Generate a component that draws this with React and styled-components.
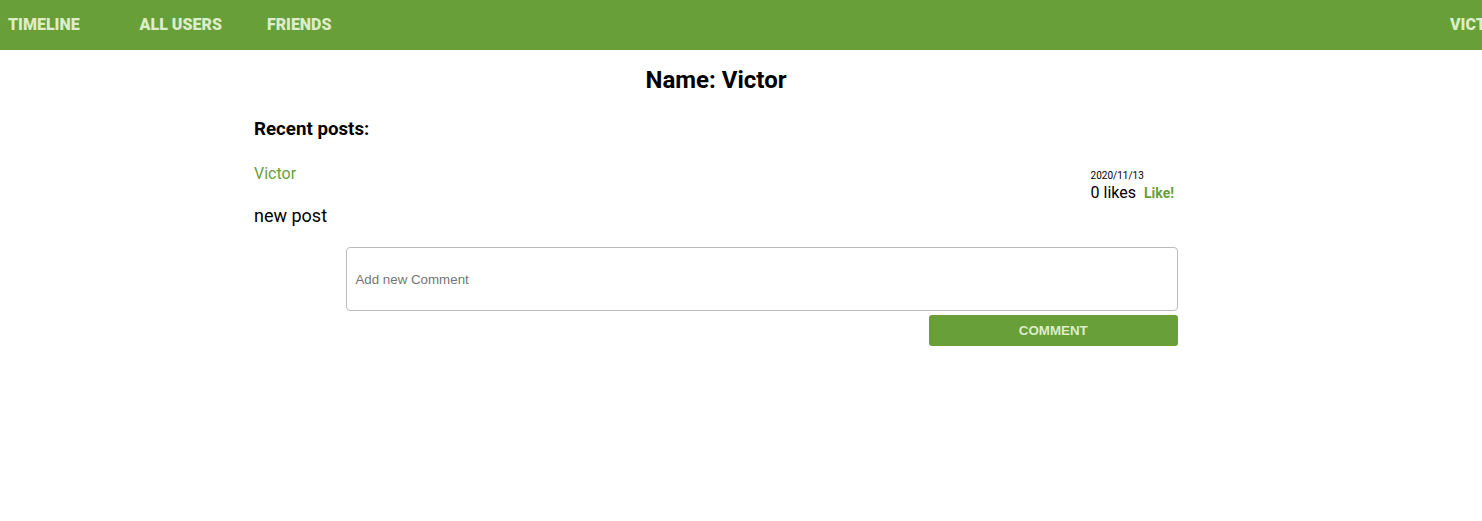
import React from "react";
import styled, { createGlobalStyle } from "styled-components";

const GlobalStyle = createGlobalStyle`
  *, *::before, *::after { box-sizing: border-box; }
  body {
    margin: 0;
    background: #fff;
    color: #000;
    font-family: Roboto, "Liberation Sans", sans-serif;
    font-size: 16px;
  }
`;

const Nav = styled.nav`
  display: flex;
  align-items: center;
  height: 50px;
  padding-left: 8px;
  overflow: hidden;
  background: #689f38;
`;

const NavLinks = styled.div`
  display: flex;
  flex: 1;
`;

const NavLink = styled.a`
  flex: none;
  margin-right: ${(p) => p.$gap || 0}px;
  color: #dcedc8;
  font-weight: 900;
  line-height: 20px;
  text-decoration: none;
  text-transform: uppercase;
  white-space: nowrap;
`;

const UserSlot = styled.div`
  display: flex;
  flex: none;
  width: 32px;
`;

const Profile = styled.main`
  width: 62.35%;
  margin-left: 17.14%;
`;

const Title = styled.h2`
  margin: 16px 0 24px;
  line-height: 28px;
  text-align: center;
`;

const Subtitle = styled.h3`
  margin: 0 0 24px;
  line-height: 22px;
`;

const PostHeader = styled.header`
  display: flex;
  justify-content: space-between;
  padding-right: 4px;
`;

const Author = styled.a`
  color: #689f38;
  line-height: 20px;
  text-decoration: none;
`;

const Meta = styled.div`
  display: flex;
  flex-direction: column;
  padding-top: 6px;
`;

const PostDate = styled.time`
  font-size: 10px;
  line-height: 12px;
`;

const Likes = styled.div`
  display: flex;
  align-items: center;
  gap: 8px;
  line-height: 22px;
`;

const LikeLink = styled.a`
  color: #689f38;
  font-size: 14px;
  font-weight: 700;
  text-decoration: none;
`;

const PostText = styled.p`
  margin: 0 0 20px;
  font-size: 18px;
  line-height: 23px;
`;

const CommentForm = styled.form`
  display: flex;
  flex-direction: column;
  align-items: flex-end;
  gap: 4px;
`;

const CommentInput = styled.input`
  width: 90%;
  height: 64px;
  padding: 8px;
  border: 1px solid #bbb;
  border-radius: 4px;
  font-family: "Liberation Sans", Arial, sans-serif;
`;

const CommentButton = styled.button`
  width: 27%;
  height: 31px;
  border: 0;
  border-radius: 3px;
  background: #689f38;
  color: #dcedc8;
  font-family: "Liberation Sans", Arial, sans-serif;
  font-weight: 700;
  text-transform: uppercase;
`;

export default function App() {
  return (
    <>
      <GlobalStyle />
      <Nav>
        <NavLinks>
          <NavLink href="#timeline" $gap={60}>Timeline</NavLink>
          <NavLink href="#users" $gap={45}>All users</NavLink>
          <NavLink href="#friends">Friends</NavLink>
        </NavLinks>
        <UserSlot>
          <NavLink href="#profile">Victor</NavLink>
        </UserSlot>
      </Nav>
      <Profile>
        <Title>Name: Victor</Title>
        <Subtitle>Recent posts:</Subtitle>
        <article>
          <PostHeader>
            <Author href="#profile">Victor</Author>
            <Meta>
              <PostDate dateTime="2020-11-13">2020/11/13</PostDate>
              <Likes>
                <span>0 likes</span>
                <LikeLink href="#like">Like!</LikeLink>
              </Likes>
            </Meta>
          </PostHeader>
          <PostText>new post</PostText>
          <CommentForm onSubmit={(e) => e.preventDefault()}>
            <CommentInput type="text" aria-label="Add new Comment" placeholder="Add new Comment" />
            <CommentButton type="submit">Comment</CommentButton>
          </CommentForm>
        </article>
      </Profile>
    </>
  );
}
